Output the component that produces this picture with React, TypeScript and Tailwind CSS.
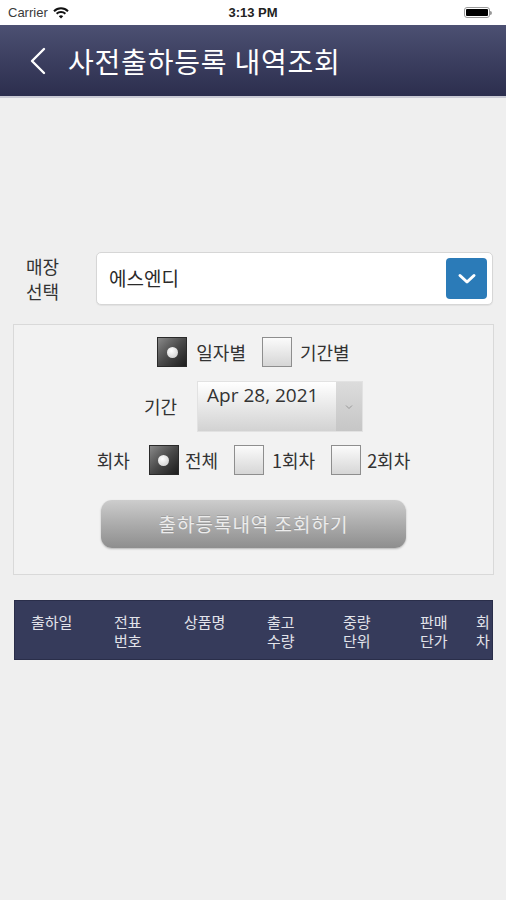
import React from "react";

const kr = { fontFamily: '"Noto Sans CJK KR", "Noto Sans", sans-serif' };

function Check({ on }: { on?: boolean }) {
  if (on) {
    return (
      <div className="w-[30px] h-[30px] border border-[#2a2a2a] bg-gradient-to-br from-[#8a8a8a] via-[#4a4a4a] to-[#1e1e1e] flex items-center justify-center shrink-0">
        <div className="w-[11px] h-[11px] rounded-full bg-[radial-gradient(circle_at_40%_35%,#ffffff,#c8c8c8)]" />
      </div>
    );
  }
  return (
    <div className="w-[30px] h-[30px] border border-[#8e8e8e] bg-gradient-to-b from-[#fbfbfb] to-[#d6d6d6] shrink-0" />
  );
}

export default function App() {
  const cols: { w: string; t: string[] }[] = [
    { w: "w-[83px]", t: ["출하일"] },
    { w: "w-[70px]", t: ["전표", "번호"] },
    { w: "w-[83px]", t: ["상품명"] },
    { w: "w-[76px]", t: ["출고", "수량"] },
    { w: "w-[77px]", t: ["중량", "단위"] },
    { w: "w-[56px]", t: ["판매", "단가"] },
    { w: "w-[30px]", t: ["회", "차"] },
  ];
  return (
    <div className="w-[506px] h-[900px] bg-[#efefef] overflow-hidden" style={kr}>
      {/* status bar */}
      <div className="h-[25px] bg-white flex items-center px-[8px] relative">
        <div className="flex items-center gap-[5px]">
          <span className="text-[13px] text-[#3a3a3a]" style={{ fontFamily: '"Liberation Sans", Arial, sans-serif' }}>Carrier</span>
          <svg width="16" height="12" viewBox="0 0 16 12">
            <path d="M1 4.2 A10 10 0 0 1 15 4.2" stroke="#111" strokeWidth="2" fill="none" />
            <path d="M3.6 6.8 A6.4 6.4 0 0 1 12.4 6.8" stroke="#111" strokeWidth="2" fill="none" />
            <path d="M8 11.5 L5.8 9.2 A3.2 3.2 0 0 1 10.2 9.2 Z" fill="#111" />
          </svg>
        </div>
        <div className="absolute left-0 right-0 text-center text-[13px] font-semibold text-[#222]" style={{ fontFamily: '"Liberation Sans", Arial, sans-serif' }}>3:13 PM</div>
        <div className="ml-auto flex items-center mr-[6px]">
          <div className="w-[26px] h-[11px] rounded-[3px] border border-[#999] p-[1px]">
            <div className="w-full h-full bg-black rounded-[1px]" />
          </div>
          <div className="w-[2px] h-[4px] bg-[#999] rounded-r" />
        </div>
      </div>

      {/* header */}
      <div className="h-[73px] bg-gradient-to-b from-[#4c5072] to-[#2c2e4e] border-b-2 border-[#c9cad4] flex items-center pl-[28px]">
        <svg width="20" height="30" viewBox="0 0 20 30" className="mr-[20px]">
          <path d="M16 3 L4 15 L16 27" stroke="#fff" strokeWidth="2.4" fill="none" strokeLinecap="round" strokeLinejoin="round" />
        </svg>
        <span className="text-white text-[28px] tracking-[0.8px]">사전출하등록 내역조회</span>
      </div>

      {/* store */}
      <div className="mt-[154px] flex items-center pl-[26px] pr-[13px]">
        <div className="w-[70px] text-[18px] leading-[25px] text-[#333]">
          <div>매장</div>
          <div>선택</div>
        </div>
        <div className="flex-1 h-[53px] bg-white border border-[#d6d6d6] rounded-[5px] flex items-center pl-[12px] pr-[5px] shadow-[0_1px_1px_rgba(0,0,0,0.06)]">
          <span className="text-[19px] text-[#2a2a2a] flex-1">에스엔디</span>
          <div className="w-[41px] h-[41px] bg-[#2b7bb8] rounded-[4px] flex items-center justify-center">
            <svg width="20" height="12" viewBox="0 0 20 12">
              <path d="M3 2.5 L10 9 L17 2.5" stroke="#fff" strokeWidth="3" fill="none" strokeLinecap="round" strokeLinejoin="round" />
            </svg>
          </div>
        </div>
      </div>

      {/* panel */}
      <div className="mt-[19px] mx-[13px] w-[481px] h-[251px] border border-[#d9d9d9] bg-[#f2f2f2] pt-[12px] flex flex-col items-center">
        <div className="flex items-center text-[18px] text-[#333]">
          <Check on />
          <span className="ml-[9px]">일자별</span>
          <div className="ml-[16px]"><Check /></div>
          <span className="ml-[8px]">기간별</span>
        </div>
        <div className="mt-[14px] flex items-center text-[18px] text-[#333]">
          <span className="mr-[20px]">기간</span>
          <div className="w-[166px] h-[51px] flex border border-[#e2e2e2] bg-gradient-to-b from-[#ffffff] to-[#d2d2d2]">
            <div className="flex-1 pl-[9px] leading-[26px] text-[19px] text-[#333]" style={{ fontFamily: '"Open Sans", "Noto Sans", sans-serif' }}>Apr 28, 2021</div>
            <div className="w-[26px] bg-gradient-to-b from-[#dcdcdc] to-[#c6c6c6] flex items-center justify-center">
              <svg width="8" height="6" viewBox="0 0 8 6"><path d="M1 1.5 L4 4.5 L7 1.5" stroke="#999" strokeWidth="1" fill="none" /></svg>
            </div>
          </div>
        </div>
        <div className="mt-[13px] flex items-center text-[18px] text-[#333]">
          <span className="mr-[19px]">회차</span>
          <Check on />
          <span className="ml-[6px]">전체</span>
          <div className="ml-[16px]"><Check /></div>
          <span className="ml-[8px]">1회차</span>
          <div className="ml-[16px]"><Check /></div>
          <span className="ml-[6px]">2회차</span>
        </div>
        <div className="mt-[25px] w-[305px] h-[48px] rounded-[11px] bg-gradient-to-b from-[#cdcdcd] via-[#acacac] to-[#8e8e8e] shadow-[0_1px_2px_rgba(0,0,0,0.25)] flex items-center justify-center">
          <span className="text-[19px] text-[#ececec] tracking-[1px] [text-shadow:0_-1px_0_rgba(0,0,0,0.15)]">출하등록내역 조회하기</span>
        </div>
      </div>

      {/* table header */}
      <div className="mt-[25px] mx-[14px] w-[479px] h-[60px] bg-[#363b5b] border border-[#2a2e4a] flex pl-[16px] pt-[11px] overflow-hidden">
        {cols.map((c, i) => (
          <div key={i} className={`${c.w} shrink-0 text-[15px] leading-[19px] text-[#e2e3ea]`}>
            {c.t.map((l, j) => (<div key={j}>{l}</div>))}
          </div>
        ))}
      </div>
    </div>
  );
}
